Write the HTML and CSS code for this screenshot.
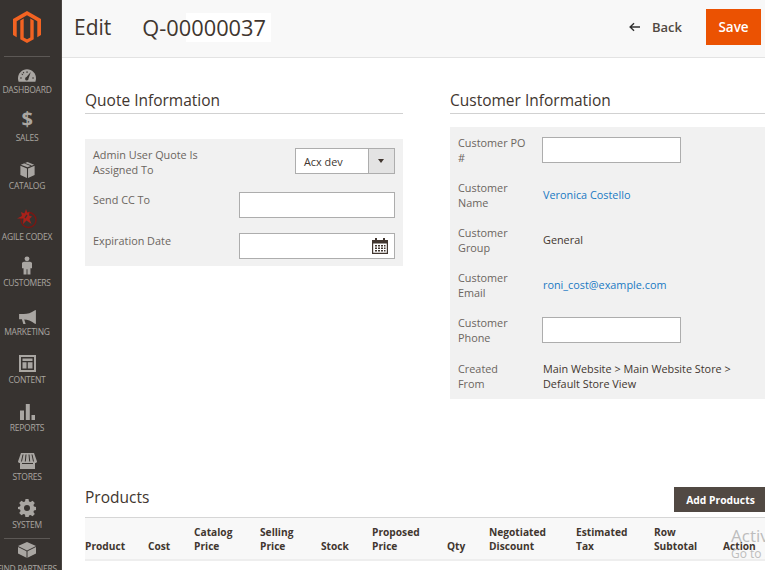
FILE: index.html
```html
<!DOCTYPE html>
<html lang="en">
  <head>
    <meta charset="UTF-8" />
    <title>Edit Q-00000037</title>
    <link rel="stylesheet" href="styles.css">
  </head>
  <body>
    <!-- left menu -->
    <nav class="sidebar">
      <div class="logo">
        <svg width="28" height="32" viewBox="0 0 28 32">
          <path fill="#f26322" d="M14 0 28 8V24L24.300 26.200V10.200L14 4.300 3.700 10.200V26.200L0 24V8Z"/>
          <path fill="#f26322" d="M7.300 9.400 10.700 7.500V26.500L14 28.300 17.300 26.500V7.500L20.700 9.400V28.200L14 32 7.300 28.200Z"/>
        </svg>
      </div>
      <a class="nav-item dashboard">
        <svg width="18" height="13" viewBox="0 0 26 18"><path fill="#a9a6a2" d="M13 0C5.800 0 0 5.800 0 13c0 1.700.3 3.400.9 5h24.200c.6-1.600.9-3.300.9-5C26 5.800 20.200 0 13 0Z"/><path fill="#373330" d="m18.500 4-6.300 7.300a2.500 2.500 0 1 0 3 2ZM3 12h2.500v1.500H3Zm17.500 0H23v1.500h-2.500ZM5.700 6l1.800 1.500-.9 1-1.700-1.600Zm6.600-3.200h1.500v2.500h-1.500ZM8 3.500l1.200 2-1.200.7-1.200-2Z"/></svg>
        <span>Dashboard</span>
      </a>
      <a class="nav-item">
        <span class="dollar">$</span>
        <span>Sales</span>
      </a>
      <a class="nav-item">
        <svg width="15" height="16" viewBox="0 0 16 18"><path fill="#a9a6a2" d="M8 0 15.500 3 8 6 .5 3ZM0 4.200 7.400 7.200V18L0 14.600ZM16 4.200V14.600L8.600 18V7.200Z"/><path fill="#373330" d="m4 1.500 7.500 3 1.300-.5-7.500-3Z"/></svg>
        <span>Catalog</span>
      </a>
      <a class="nav-item agile">
        <svg width="20" height="20" viewBox="0 0 20 20"><circle cx="11.500" cy="11" r="7.500" fill="none" stroke="#7a1712" stroke-width="1.400"/><path fill="#a8211a" d="M9 0l1.500 4 2-1.500-.5 4 3 1-2.500 2.500 2 5-5-3.500L6 15l.5-5.500L0 9.500l5-2.500L4 3l3.500 1.500Z"/><path fill="#373330" d="M9.500 5.500l1 1-2 3-1-1Z"/></svg>
        <span>Agile Codex</span>
      </a>
      <a class="nav-item customers">
        <svg width="10" height="19" viewBox="0 0 11 20"><circle cx="5.500" cy="2.700" r="2.700" fill="#a9a6a2"/><path fill="#a9a6a2" d="M2 6h7l2 1v6H9.300v7H6V14H5v6H1.700v-7H0V7Z"/></svg>
        <span>Customers</span>
      </a>
      <a class="nav-item marketing">
        <svg width="17" height="14" viewBox="0 0 18 15"><path fill="#a9a6a2" d="M18 0V15L16.500 14.500C13 11.500 9 10.500 5.500 10.300L7 15H4.500L3 10H0V4.300H5C9 4.300 13 3 16.500 .5Z"/></svg>
        <span>Marketing</span>
      </a>
      <a class="nav-item">
        <svg width="17" height="17" viewBox="0 0 17 17"><path fill="#a9a6a2" fill-rule="evenodd" d="M0 0H17V17H0ZM2 2V15H15V2ZM3.500 3.500H13.500V6H3.500ZM3.500 7.300H7.500V13.500H3.500ZM8.800 7.300H13.500V13.500H8.800Z"/></svg>
        <span>Content</span>
      </a>
      <a class="nav-item">
        <svg width="15" height="16" viewBox="0 0 15 16"><path fill="#a9a6a2" d="M0 6.500H4V16H0ZM5.800 0H9.800V16H5.800ZM11.500 11H15V16H11.500Z"/></svg>
        <span>Reports</span>
      </a>
      <a class="nav-item stores">
        <svg width="19" height="16" viewBox="0 0 19 16"><path fill="#a9a6a2" d="M3 0H16L19 8.500C19 10 17.500 10 17 10V16H2V10C1.500 10 0 10 0 8.500Z"/><path stroke="#373330" stroke-width="1" fill="none" d="M5 1.500 3.500 8.500M8 1.500 7.300 8.500M11 1.500 11.700 8.500M14 1.500 15.500 8.500M4 10.500H15"/></svg>
        <span>Stores</span>
      </a>
      <a class="nav-item">
        <svg width="18" height="18" viewBox="0 0 18 18"><path fill="#a9a6a2" fill-rule="evenodd" d="M7.500 0h3l.5 2.500 1.500.6 2.100-1.400 2.200 2.200-1.400 2.100.6 1.500 2 .5v3l-2 .5-.6 1.500 1.400 2.100-2.200 2.200-2.100-1.400-1.500.6-.5 2.400h-3L7 15.500l-1.500-.6-2.100 1.400-2.200-2.200 1.400-2.100-.6-1.500L0 10V8l2-.5.6-1.500-1.400-2.100 2.200-2.200 2.100 1.400L7 2.500ZM9 6a3 3 0 1 0 0 6 3 3 0 0 0 0-6Z"/></svg>
        <span>System</span>
      </a>
      <a class="nav-item partners">
        <svg width="18" height="16" viewBox="0 0 18 16"><path fill="#a9a6a2" d="M9 0 18 4V11.500L9 16 0 11.500V4Z"/><path fill="none" stroke="#373330" d="M0 4.500 9 9 18 4.500M9 9V16"/></svg>
        <span>Find Partners</span>
      </a>
    </nav>

    <div class="page">
      <header class="page-header">
        <h1>Edit</h1>
        <span class="quote-number">Q-00000037</span>
        <a class="back">
          <svg width="11" height="10" viewBox="0 0 12 10"><path fill="none" stroke="#303030" stroke-width="1.500" d="M5.500 .8 1.200 5l4.300 4.200M1.200 5H12"/></svg>
          Back
        </a>
        <button class="save">Save</button>
      </header>

      <main class="content">
        <div class="info-columns">
          <section class="quote-info">
            <h2>Quote Information</h2>
            <div class="panel quote-panel">
              <div class="field-row select-row">
                <label>Admin User Quote Is Assigned To</label>
                <div class="select"><span>Acx dev</span><i></i></div>
              </div>
              <div class="field-row">
                <label>Send CC To</label>
                <input class="wide-input" type="text" />
              </div>
              <div class="field-row">
                <label>Expiration Date</label>
                <div class="date-input">
                  <svg width="16" height="16" viewBox="0 0 16 16">
                    <path fill="#41362f" fill-rule="evenodd" d="M0 2H3V0H5V2H11V0H13V2H16V16H0ZM1.200 5.500V14.800H14.800V5.500Z"/>
                    <path fill="#41362f" d="M3 7H5V8.500H3ZM6 7H8V8.500H6ZM9 7H11V8.500H9ZM12 7H13.500V8.500H12ZM3 9.500H5V11H3ZM6 9.500H8V11H6ZM9 9.500H11V11H9ZM12 9.500H13.500V11H12ZM3 12H5V13.500H3ZM6 12H8V13.500H6ZM9 12H11V13.500H9ZM12 12H13.500V13.500H12Z"/>
                  </svg>
                </div>
              </div>
            </div>
          </section>

          <section class="customer-info">
            <h2>Customer Information</h2>
            <div class="panel customer-panel">
              <div class="customer-row">
                <label>Customer PO #</label>
                <input type="text" />
              </div>
              <div class="customer-row">
                <label>Customer Name</label>
                <a class="link">Veronica Costello</a>
              </div>
              <div class="customer-row">
                <label>Customer Group</label>
                <span>General</span>
              </div>
              <div class="customer-row">
                <label>Customer Email</label>
                <a class="link">roni_cost@example.com</a>
              </div>
              <div class="customer-row">
                <label>Customer Phone</label>
                <input type="text" />
              </div>
              <div class="customer-row created-row">
                <label>Created From</label>
                <span>Main Website &gt; Main Website Store &gt; Default Store View</span>
              </div>
            </div>
          </section>
        </div>

        <section class="products">
          <div class="products-head">
            <h2>Products</h2>
            <button class="add-products">Add Products</button>
          </div>
          <div class="products-table">
            <div>Product</div>
            <div>Cost</div>
            <div>Catalog Price</div>
            <div>Selling Price</div>
            <div>Stock</div>
            <div>Proposed Price</div>
            <div>Qty</div>
            <div>Negotiated Discount</div>
            <div>Estimated Tax</div>
            <div>Row Subtotal</div>
            <div>Action</div>
          </div>
        </section>
      </main>
    </div>

    <!-- windows watermark over the page -->
    <div class="watermark">
      <div class="wm-big">Activate Windows</div>
      <div class="wm-small">Go to Settings to activate Windows.</div>
    </div>
  </body>
</html>
```

FILE: styles.css
```css
* {
  box-sizing: border-box;
}
html,
body {
  height: 570px;
  overflow: hidden;
}
body {
  margin: 0;
  display: flex;
  font-family: "Open Sans", sans-serif;
  font-size: 12px;
  color: #41362f;
  background-color: white;
}

/* left menu */
.sidebar {
  width: 62px;
  flex-shrink: 0;
  height: 570px;
  overflow: hidden;
  padding-right: 7px;
  background-color: #373330;
  border-right: 1px solid #4a4542;
}
.logo {
  height: 57px;
  margin: 0 4px;
  padding-top: 11px;
  display: flex;
  justify-content: center;
  border-bottom: 1px solid #5c5855;
}
.nav-item {
  height: 48px;
  display: flex;
  flex-direction: column;
  align-items: center;
  justify-content: flex-end;
  gap: 2px;
  font-size: 8.500px;
  letter-spacing: -0.25px;
  line-height: 12px;
  color: #aaa6a0;
  text-transform: uppercase;
  white-space: nowrap;
}
.dashboard {
  height: 39px;
}
.dollar {
  font-size: 20px;
  font-weight: 700;
  line-height: 20px;
  height: 21px;
}
.agile {
  height: 51px;
}
.customers {
  height: 46px;
}
.marketing,
.stores {
  height: 49px;
}
.partners {
  height: 46px;
  border-top: 1px solid #5c5855;
  margin: 7px 4px 0;
  padding-top: 3px;
  gap: 5px;
  justify-content: flex-start;
}

/* top bar */
.page {
  width: 703px;
  flex-shrink: 0;
}
.page-header {
  height: 58px;
  display: flex;
  align-items: flex-start;
  background-color: #f8f8f8;
  border-bottom: 1px solid #e3e3e3;
}
h1 {
  margin: 12px 0 0 12px;
  font-size: 21px;
  font-weight: 400;
  line-height: 30px;
  color: #41362f;
}
.quote-number {
  margin: 13px 0 0 31px;
  width: 129px;
  height: 29px;
  font-size: 21.800px;
  line-height: 30px;
  background: linear-gradient(to right, transparent 44px, white 44px);
  color: #41362f;
}
.back {
  margin: 18px 0 0 auto;
  display: flex;
  align-items: center;
  gap: 12px;
  font-size: 13px;
  font-weight: 600;
  line-height: 18px;
  color: #514943;
}
.save {
  width: 55px;
  height: 36px;
  margin: 9px 4px 0 24px;
  padding: 0;
  font-family: inherit;
  font-size: 13.500px;
  font-weight: 600;
  color: white;
  background-color: #eb5202;
  border: none;
}

/* info columns */
.content {
  padding: 31px 0 0 23px;
}
.info-columns {
  display: flex;
  gap: 47px;
  height: 399px;
}
h2 {
  margin: 0;
  font-size: 15.500px;
  font-weight: 400;
  line-height: 22px;
  color: #41362f;
}
.quote-info {
  width: 318px;
  flex-shrink: 0;
}
.quote-info h2,
.customer-info h2 {
  height: 25px;
  border-bottom: 1px solid #d1d1d1;
}
.customer-info {
  flex: 1;
}
.panel {
  background-color: #f1f1f1;
}
.quote-panel {
  margin-top: 25px;
  height: 127px;
  padding: 7px 8px 0;
}
.field-row {
  display: flex;
  justify-content: space-between;
  align-items: flex-start;
  height: 41px;
  padding-top: 1px;
  font-size: 10.850px;
}
.select-row {
  height: 46px;
  padding-top: 2px;
}
label {
  margin-top: -1px;
  line-height: 15px;
  color: #6b6560;
  font-size: 10.850px;
}
.select-row label {
  width: 130px;
}
.select {
  display: flex;
  width: 100px;
  height: 26px;
  font-size: 10.850px;
  line-height: 25px;
  background-color: white;
  border: 1px solid #adadad;
}
.select span {
  flex: 1;
  padding-left: 8px;
  color: #41362f;
}
.select i {
  width: 26px;
  border-left: 1px solid #adadad;
  background-color: #e3e3e3;
  position: relative;
}
.select i::after {
  content: "";
  position: absolute;
  left: 9px;
  top: 10px;
  border-top: 4px solid #41362f;
  border-left: 3px solid transparent;
  border-right: 3px solid transparent;
}
input,
.date-input {
  background-color: white;
  border: 1px solid #adadad;
  border-radius: 0;
}
.wide-input,
.date-input {
  width: 156px;
  height: 26px;
  margin-top: -1px;
}
.date-input {
  display: flex;
  justify-content: flex-end;
  align-items: center;
  padding-right: 6px;
}

/* customer block */
.customer-panel {
  margin-top: 13px;
  height: 272px;
}
.customer-row {
  display: flex;
  align-items: center;
  height: 45px;
  font-size: 10.850px;
  line-height: 15px;
}
.customer-row label {
  width: 92px;
  margin-top: 0;
  padding: 0 15px 0 8px;
  flex-shrink: 0;
}
.customer-row input {
  width: 139px;
  height: 26px;
  margin-top: 1px;
}
.customer-row span,
.customer-row a {
  margin-left: 1px;
}
.created-row {
  padding-top: 2px;
}
.created-row span {
  width: 200px;
}
.link {
  color: #1979c3;
}

/* products */
.products-head {
  display: flex;
  justify-content: space-between;
  align-items: flex-start;
  height: 29px;
}
.products-head h2 {
  margin-top: -2px;
}
.add-products {
  flex-shrink: 0;
  width: 93px;
  height: 25px;
  margin: -1px -2px 0 0;
  padding: 0;
  font-family: inherit;
  font-size: 10.300px;
  font-weight: 700;
  color: white;
  background-color: #514943;
  border: none;
}
.products-table {
  display: grid;
  grid-template-columns: 63px 46px 66px 61px 51px 75px 42px 87px 78px 69px 1fr;
  align-items: end;
  height: 44px;
  padding-bottom: 6px;
  font-size: 10.200px;
  font-weight: 700;
  line-height: 14px;
  color: #41362f;
  background-color: #f8f8f8;
  border-top: 1px solid #d6d6d6;
  border-bottom: 2px solid #eeeeee;
}
.products-table div {
  padding-right: 8px;
}

/* windows watermark */
.watermark {
  position: absolute;
  left: 731px;
  top: 525px;
  width: 300px;
  color: #bdbdbd;
}
.wm-big {
  font-size: 17px;
  line-height: 22px;
}
.wm-small {
  font-size: 12px;
  line-height: 14px;
}
```
